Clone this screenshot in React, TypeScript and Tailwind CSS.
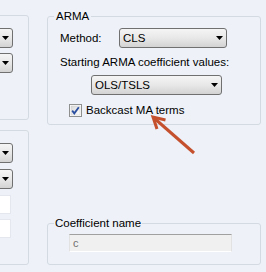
import React from "react";

function Arrow() {
  return (
    <svg width="7" height="4" viewBox="0 0 7 4" className="shrink-0">
      <polygon points="0,0 7,0 3.5,4" fill="#000" />
    </svg>
  );
}

function Combo({ text, className = "" }: { text?: string; className?: string }) {
  return (
    <div
      className={`h-[20px] rounded-[3px] border border-[#707070] bg-linear-to-b from-[#f5f5f5] via-[#e8e8e8] to-[#d3d3d3] flex items-center justify-between pl-[3px] pr-[3px] ${className}`}
    >
      <span className="leading-[14px]">{text}</span>
      <Arrow />
    </div>
  );
}

function CheckBox() {
  return (
    <svg width="13" height="13" viewBox="0 0 13 13" className="shrink-0">
      <defs>
        <linearGradient id="cbg" x1="0" y1="0" x2="1" y2="1">
          <stop offset="0" stopColor="#d8d8d8" />
          <stop offset="1" stopColor="#ffffff" />
        </linearGradient>
      </defs>
      <rect x="0.5" y="0.5" width="12" height="12" fill="#fff" stroke="#8e8f8f" />
      <rect x="2" y="2" width="9" height="9" fill="url(#cbg)" stroke="#c8c8c8" strokeWidth="0.5" />
      <path d="M3.2 6.6 L5.3 9.4 L9.8 3.2" fill="none" stroke="#2a4ea0" strokeWidth="1.8" />
    </svg>
  );
}

export default function App() {
  return (
    <div className="relative w-[266px] h-[272px] overflow-hidden bg-[#eef2f8] text-black text-[11.5px] font-['Liberation_Sans',Arial,sans-serif] flex">
      {/* left column (clipped) */}
      <div className="w-[29px] shrink-0 overflow-hidden">
        <div className="-ml-[100px] w-[129px] flex flex-col">
          <div className="mt-[15px] h-[105px] rounded-[3px] border border-[#d3dae2] flex flex-col items-end pr-[15px] pt-[12px] gap-[5px]">
            <Combo className="w-[60px]" />
            <Combo className="w-[60px]" />
          </div>
          <div className="mt-[10px] h-[135px] rounded-[3px] border border-[#d3dae2] flex flex-col items-end pr-[15px] pt-[12px]">
            <Combo className="w-[60px]" />
            <Combo className="w-[60px] mt-[6px]" />
            <div className="w-[60px] h-[19px] bg-white border border-[#e4e8ee] mt-[6px] mr-[2px]" />
            <div className="w-[60px] h-[19px] bg-white border border-[#e4e8ee] mt-[5px] mr-[2px]" />
          </div>
        </div>
      </div>

      {/* right column */}
      <div className="ml-[18px] w-[214px] flex flex-col">
        <fieldset className="mt-[9px] rounded-[3px] border border-[#d3dae2] pb-[7px]">
          <legend className="ml-[6px] px-[2px] leading-[14px]">ARMA</legend>
          <div className="mt-[5px] pl-[12px] flex items-center">
            <span className="w-[59px] leading-[14px]">Method:</span>
            <Combo text="CLS" className="w-[108px]" />
          </div>
          <div className="mt-[7px] pl-[12px] leading-[14px]">Starting ARMA coefficient values:</div>
          <Combo text="OLS/TSLS" className="mt-[6px] ml-[43px] w-[131px]" />
          <div className="mt-[8px] ml-[21px] flex items-center gap-[4px]">
            <CheckBox />
            <span className="leading-[14px]">Backcast MA terms</span>
          </div>
        </fieldset>

        <fieldset className="mt-[91px] rounded-[3px] border border-[#d3dae2] pb-[12px]">
          <legend className="ml-[6px] px-[1px] leading-[14px]">Coefficient name</legend>
          <div className="mt-[4px] ml-[21px] w-[163px] h-[18px] bg-[#f0f0f0] border-t border-t-[#a0a0a0] border-x border-x-[#e2e2e2] border-b border-b-white flex items-center pl-[3px] text-[#707070] text-[11px] leading-[12px]">
            c
          </div>
        </fieldset>
      </div>

      {/* annotation arrow */}
      <svg className="absolute left-0 top-0 pointer-events-none" width="266" height="272">
        <line x1="194" y1="153" x2="154" y2="118" stroke="#c4502d" strokeWidth="3" />
        <polyline points="157,129 153,117 165.5,120" fill="none" stroke="#c4502d" strokeWidth="3" strokeLinejoin="miter" />
      </svg>
    </div>
  );
}
